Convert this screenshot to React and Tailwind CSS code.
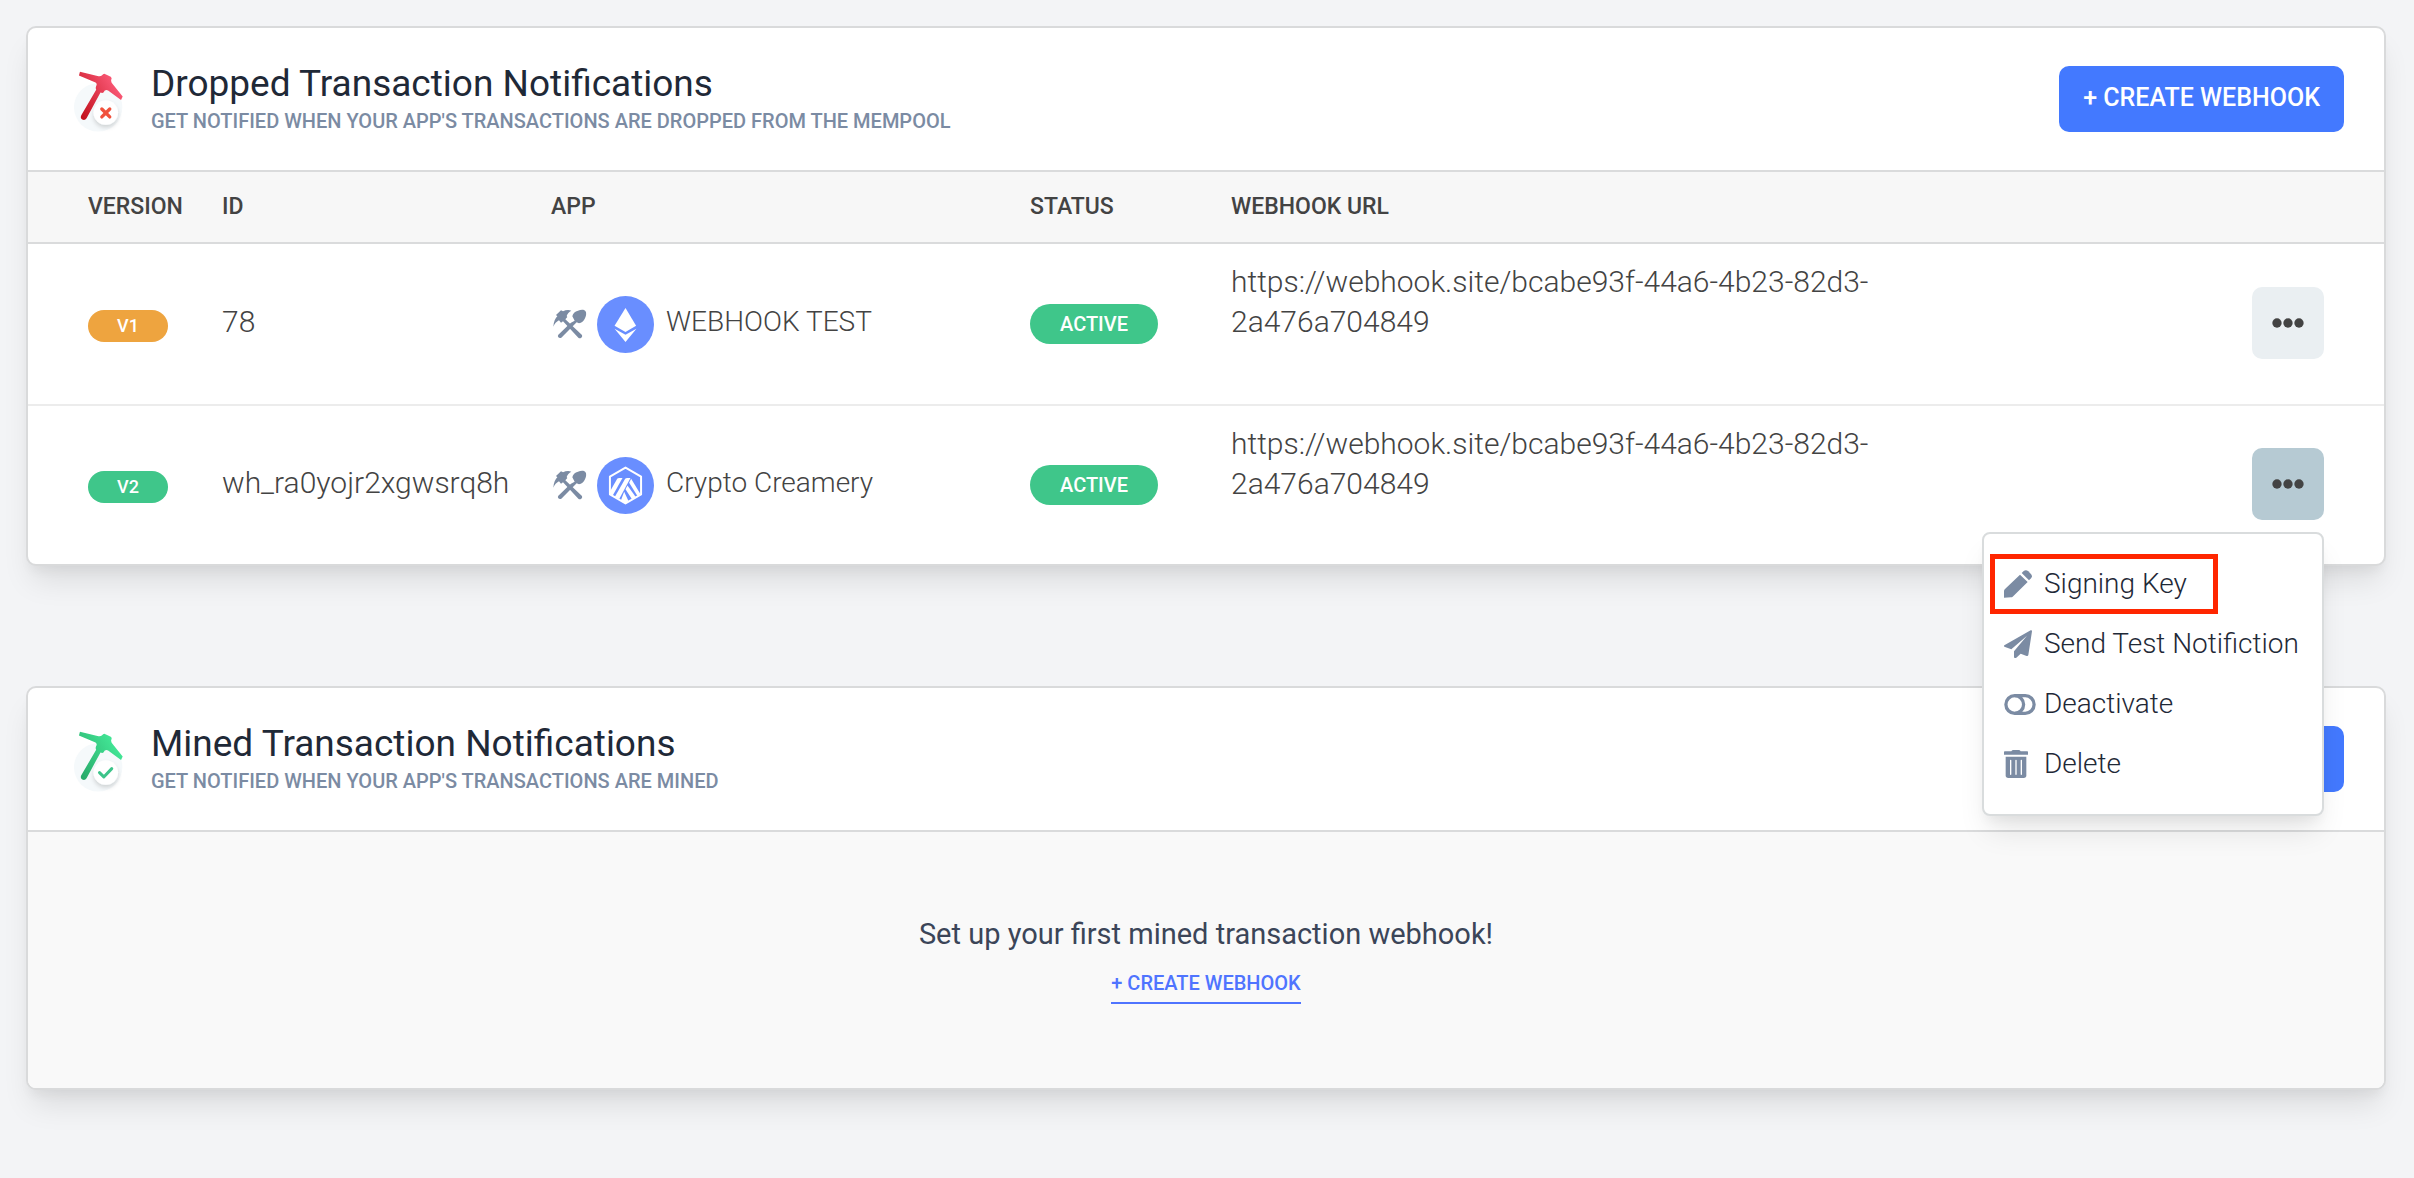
import { useId } from "react";

const cardShadow =
  "shadow-[0_20px_30px_-6px_rgba(0,0,0,0.1),0_8px_12px_-4px_rgba(0,0,0,0.05)]";

function Pickaxe({ from, to, children }) {
  const id = useId();
  return (
    <svg viewBox="36 60 160 204" className="mt-2 h-[68px] w-[53px] shrink-0" aria-hidden="true">
      <defs>
        <linearGradient id={id} x1="0" y1="1" x2="1" y2="0.3">
          <stop offset="0" stopColor={from} />
          <stop offset="1" stopColor={to} />
        </linearGradient>
        <filter id={id + "s"} x="-50%" y="-50%" width="200%" height="200%">
          <feDropShadow dx="0" dy="8" stdDeviation="6" floodColor="#000" floodOpacity="0.16" />
        </filter>
      </defs>
      <circle cx="115" cy="175" r="73" fill="#f5f9fb" />
      <path
        d="M60 68L116 81Q122 82 126 79L130 75Q133 73 137 75L153 83Q158 87 154 93Q154 99 158 104L189 142L184 153L145 124Q140 121 135 124L131 130Q128 133 122 130L80 208Q75 216 67 212Q60 208 64 199L109 122Q106 117 109 111Q113 104 107 100L57 79Z"
        fill={`url(#${id})`}
      />
      <circle cx="138" cy="191" r="37" fill="#fff" filter={`url(#${id}s)`} />
      {children}
    </svg>
  );
}

function DroppedIcon() {
  return (
    <Pickaxe from="#bd0a14" to="#ff5f7e">
      <path d="M126 180L150 204M150 180L126 204" stroke="#f0513c" strokeWidth="10" strokeLinecap="round" fill="none" />
    </Pickaxe>
  );
}

function MinedIcon() {
  return (
    <Pickaxe from="#27a567" to="#45ec9a">
      <path d="M119 191L132 204L156 179" stroke="#3cc48a" strokeWidth="9" strokeLinecap="round" strokeLinejoin="round" fill="none" />
    </Pickaxe>
  );
}

function ToolsIcon() {
  return (
    <svg viewBox="39 56 102 90" className="h-[30px] w-[34px] shrink-0" fill="#7b8ba3" aria-hidden="true">
      <path d="M40 109C41 94 46 84 52 78L48 74L63 60L69 63C77 59 86 58 94 61C87 65 82 70 80 77L82 80L76 87L126 134Q128 139 124 142Q119 145 115 142L69 93L63 97L57 90C49 94 44 100 40 109Z" />
      <path d="M104 91L97 78C98 70 105 63 114 61C122 58 132 57 136 62C140 66 139 76 135 84C131 92 125 99 117 99L110 96L64 142Q59 145 55 141Q52 137 55 133L86 103L93 97Z" />
    </svg>
  );
}

function EthIcon() {
  return (
    <svg viewBox="0 0 172 172" className="size-[57px] shrink-0" aria-hidden="true">
      <circle cx="86" cy="86" r="86" fill="#698eff" />
      <path d="M86 36L118 90L86 109L53 90Z" fill="#fff" />
      <path d="M53 99L86 117L119 99L86 139Z" fill="#fff" />
    </svg>
  );
}

function ArbitrumIcon() {
  return (
    <svg viewBox="0 0 172 172" className="size-[57px] shrink-0" aria-hidden="true">
      <circle cx="86" cy="86" r="86" fill="#698eff" />
      <path d="M86 32L133 59V113L86 140L39 113V59Z" fill="none" stroke="#fff" strokeWidth="6" strokeLinejoin="round" />
      <g fill="#fff">
        <path d="M39 104L61 66Q63 63 67 63H77L47 117L39 112Z" />
        <path d="M54 120L85 66Q87 63 91 63H101L67 127Z" />
        <path d="M103 66L131 112L122 118L97 78Z" />
        <path d="M92 86L117 121L106 128L86 97Z" />
        <path d="M82 105L95 133L86 139L72 131Z" />
      </g>
    </svg>
  );
}

function PencilIcon() {
  return (
    <svg viewBox="0 0 84 84" className="size-7" fill="currentColor" aria-hidden="true">
      <path d="M0 83V63Q0 60 3 57L48 14L71 36L26 80Q24 82 21 82Z" />
      <path d="M53 9L59 3Q66-2 73 4L80 11Q87 18 81 25L75 31Z" />
    </svg>
  );
}

function SendIcon() {
  return (
    <svg viewBox="0 0 84 84" className="size-7" fill="currentColor" aria-hidden="true">
      <path d="M1 46L80 1Q84-1 84 4L73 75Q72 79 68 78L50 71L37 83Q31 86 30 81V64L69 17L22 58L1 50Q-1 48 1 46Z" />
    </svg>
  );
}

function ToggleIcon() {
  return (
    <svg viewBox="0 0 96 64" className="h-[21px] w-8" fill="none" stroke="currentColor" strokeWidth="10" aria-hidden="true">
      <rect x="5" y="5" width="86" height="54" rx="27" />
      <path d="M32 5A27 27 0 0 1 32 59" />
    </svg>
  );
}

function TrashIcon() {
  return (
    <svg viewBox="0 0 72 84" className="h-7 w-6" aria-hidden="true">
      <path d="M0 5Q0 4 2 4H22Q24 0 28 0H44Q48 0 50 4H70Q72 4 72 6V14H0Z" fill="currentColor" />
      <path d="M5 20H67V76Q67 84 59 84H13Q5 84 5 76Z" fill="currentColor" />
      <path d="M20 31V73M36 31V73M52 31V73" stroke="#fff" strokeWidth="4" strokeLinecap="round" />
    </svg>
  );
}

function DotsIcon() {
  return (
    <svg viewBox="0 0 96 30" className="h-[10px] w-8" fill="#434343" aria-hidden="true">
      <circle cx="15" cy="15" r="14" />
      <circle cx="48" cy="15" r="14" />
      <circle cx="81" cy="15" r="14" />
    </svg>
  );
}

function CardHeader({ icon, title, subtitle }) {
  return (
    <header className="flex min-h-36 items-center border-b-2 border-[#dadbdc] pr-10 pl-11">
      {icon}
      <div className="ml-[26px] flex-1">
        <h2 className="text-[37px] leading-[44px] text-[#1f2937]">{title}</h2>
        <p className="text-[20px] leading-[30px] font-medium text-[#7b8ba3] uppercase">{subtitle}</p>
      </div>
      <button
        type="button"
        className="h-[66px] rounded-[10px] bg-[#4379ff] px-6 pb-0.5 text-[25px] leading-8 font-medium whitespace-nowrap text-white"
      >
        + CREATE WEBHOOK
      </button>
    </header>
  );
}

const menuItems = [
  { label: "Signing Key", Icon: PencilIcon, marked: true },
  { label: "Send Test Notifiction", Icon: SendIcon },
  { label: "Deactivate", Icon: ToggleIcon },
  { label: "Delete", Icon: TrashIcon },
];

function ActionMenu() {
  return (
    <div
      role="menu"
      className="absolute top-full right-0 z-20 mt-3 h-[284px] w-[342px] rounded-lg border-2 border-[#d9dcdd] bg-white pt-5 pl-1.5 shadow-[0_20px_30px_-6px_rgba(0,0,0,0.1),0_8px_12px_-4px_rgba(0,0,0,0.05)]"
    >
      {menuItems.map(({ label, Icon, marked }) => (
        <button
          key={label}
          type="button"
          role="menuitem"
          className={
            "flex h-[60px] items-center border-[5px] pl-[9px] text-[28px] leading-9 font-light whitespace-nowrap text-[#1f2937] " +
            (marked ? "w-[228px] border-[#ff2600]" : "border-transparent")
          }
        >
          <span className="flex w-10 shrink-0 text-[#7b8ba3]">
            <Icon />
          </span>
          {label}
        </button>
      ))}
    </div>
  );
}

const webhooks = [
  { version: "V1", color: "bg-[#eea43f]", id: "78", Chain: EthIcon, app: "WEBHOOK TEST", open: false },
  { version: "V2", color: "bg-[#3fc68a]", id: "wh_ra0yojr2xgwsrq8h", Chain: ArbitrumIcon, app: "Crypto Creamery", open: true },
];

function WebhookTable() {
  return (
    <table className="w-full table-fixed text-left text-[28px] leading-10 font-light text-[#434343]">
      <colgroup>
        <col className="w-[194px]" />
        <col className="w-[329px]" />
        <col className="w-[479px]" />
        <col className="w-[201px]" />
        <col />
        <col className="w-[134px]" />
      </colgroup>
      <thead>
        <tr className="h-[71px] border-b-2 border-[#dadbdc] bg-[#f7f7f7] text-[23px] leading-7">
          <th scope="col" className="pl-[60px] font-medium">VERSION</th>
          <th scope="col" className="font-medium">ID</th>
          <th scope="col" className="font-medium">APP</th>
          <th scope="col" className="font-medium">STATUS</th>
          <th scope="col" className="font-medium">WEBHOOK URL</th>
          <td></td>
        </tr>
      </thead>
      <tbody>
        {webhooks.map(({ version, color, id, Chain, app, open }) => (
          <tr key={version} className="h-[162px] border-b-2 border-[#ececec] last:h-[159px] last:border-b-0">
            <td className="pl-[60px]">
              <span className={"mt-1 flex h-8 w-20 items-center justify-center rounded-[16px] text-[18px] leading-6 font-medium text-white " + color}>
                {version}
              </span>
            </td>
            <td className="pb-1 text-[30px]">{id}</td>
            <td>
              <div className="flex items-center pl-0.5">
                <ToolsIcon />
                <span className="mr-3 ml-[10px]"><Chain /></span>
                <span className="pb-1">{app}</span>
              </div>
            </td>
            <td>
              <span className="flex h-10 w-32 items-center justify-center rounded-[20px] bg-[#3fc68a] text-[20px] leading-6 font-medium text-white">
                ACTIVE
              </span>
            </td>
            <td className="pt-[18px] align-top text-[30px]">
              <div className="max-w-[720px]">
                https://webhook.site/bcabe93f-44a6-4b23-82d3-
                <br />
                2a476a704849
              </div>
            </td>
            <td className="pb-0.5">
              <div className="relative w-[74px]">
                <button
                  type="button"
                  aria-label={"Actions for " + app}
                  aria-haspopup="menu"
                  aria-expanded={open}
                  className={
                    "ml-0.5 flex size-[72px] items-center justify-center rounded-[10px] " +
                    (open ? "bg-[#b6cad3]" : "bg-[#eaeff2]")
                  }
                >
                  <DotsIcon />
                </button>
                {open && <ActionMenu />}
              </div>
            </td>
          </tr>
        ))}
      </tbody>
    </table>
  );
}

export default function App() {
  return (
    <main className="flex min-h-screen flex-col gap-[120px] bg-[#f3f4f6] pt-[26px] pr-7 pb-20 pl-[26px] font-['Roboto',sans-serif]">
      <section className={"rounded-[10px] border-2 border-[#d9dadb] bg-white " + cardShadow}>
        <CardHeader
          icon={<DroppedIcon />}
          title="Dropped Transaction Notifications"
          subtitle="Get notified when your app's transactions are dropped from the mempool"
        />
        <WebhookTable />
      </section>

      <section className={"rounded-[10px] border-2 border-[#d9dadb] bg-white " + cardShadow}>
        <CardHeader
          icon={<MinedIcon />}
          title="Mined Transaction Notifications"
          subtitle="Get notified when your app's transactions are mined"
        />
        <div className="flex flex-col items-center rounded-b-lg bg-[#f9f9f9] pt-[82px] pb-[84px]">
          <p className="text-[29px] leading-10 text-[#3b4558]">Set up your first mined transaction webhook!</p>
          <a href="#create" className="mt-4 border-b-2 border-[#4f74ff] pb-1.5 text-[20px] leading-[26px] font-medium text-[#4f74ff]">
            + CREATE WEBHOOK
          </a>
        </div>
      </section>
    </main>
  );
}
